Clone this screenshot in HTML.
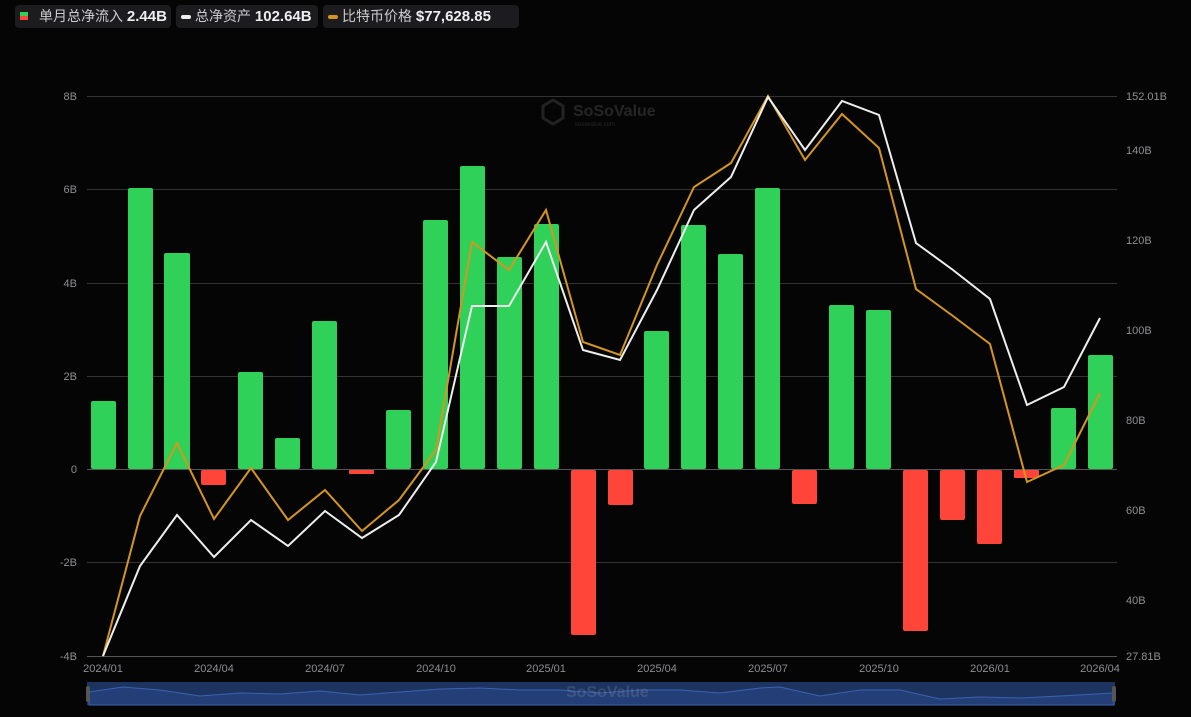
<!DOCTYPE html>
<html><head><meta charset="utf-8"><style>
html,body{margin:0;padding:0;background:#050505;width:1191px;height:717px;overflow:hidden}
.lg{position:absolute;top:5px;height:23px;background:#1c1c1e;border-radius:4px;color:#ccc;font:14px "Liberation Sans","Noto Sans CJK SC",sans-serif;line-height:23px;white-space:nowrap}
.lg b{color:#eee;font-weight:bold;font-size:15px}
svg text{font-family:"Liberation Sans",sans-serif;font-size:11px;fill:#8e8e93}
</style></head><body>
<div class="lg" style="left:15px;width:156px"><span style="position:absolute;left:5px;top:7px;width:8px;height:4px;background:#30d158"></span><span style="position:absolute;left:5px;top:11px;width:8px;height:4px;background:#ff453a"></span><span style="position:absolute;left:24px">单月总净流入 <b>2.44B</b></span></div>
<div class="lg" style="left:176px;width:142px"><span style="position:absolute;left:5px;top:10px;width:10px;height:4px;border-radius:2px;background:#eee"></span><span style="position:absolute;left:19px">总净资产 <b>102.64B</b></span></div>
<div class="lg" style="left:323px;width:196px"><span style="position:absolute;left:5px;top:10px;width:10px;height:4px;border-radius:2px;background:#d4961f"></span><span style="position:absolute;left:19px">比特币价格 <b>$77,628.85</b></span></div>
<svg width="1191" height="717" style="position:absolute;left:0;top:0">
<g stroke="#333" stroke-width="1">
<line x1="87" x2="1117" y1="96.5" y2="96.5"/><line x1="87" x2="1117" y1="189.5" y2="189.5"/><line x1="87" x2="1117" y1="283.5" y2="283.5"/><line x1="87" x2="1117" y1="376.5" y2="376.5"/><line x1="87" x2="1117" y1="562.5" y2="562.5"/>
</g>
<line x1="87" x2="1117" y1="469.5" y2="469.5" stroke="#555"/>
<line x1="87" x2="1117" y1="656.5" y2="656.5" stroke="#555"/>
<g text-anchor="end">
<text x="77" y="100">8B</text><text x="77" y="193">6B</text><text x="77" y="287">4B</text><text x="77" y="380">2B</text><text x="77" y="473">0</text><text x="77" y="566">-2B</text><text x="77" y="660">-4B</text>
</g>
<g>
<text x="1126" y="100">152.01B</text><text x="1126" y="154">140B</text><text x="1126" y="244">120B</text><text x="1126" y="334">100B</text><text x="1126" y="424">80B</text><text x="1126" y="514">60B</text><text x="1126" y="604">40B</text><text x="1126" y="660">27.81B</text>
</g>
<g text-anchor="middle">
<text x="103" y="672">2024/01</text><text x="214" y="672">2024/04</text><text x="325" y="672">2024/07</text><text x="436" y="672">2024/10</text><text x="546" y="672">2025/01</text><text x="657" y="672">2025/04</text><text x="768" y="672">2025/07</text><text x="879" y="672">2025/10</text><text x="990" y="672">2026/01</text><text x="1100" y="672">2026/04</text>
</g>
<g opacity="0.22">
<path d="M553 100 l10 6 v12 l-10 6 l-10 -6 v-12z" fill="none" stroke="#888" stroke-width="3"/>
<text x="573" y="116" style="font-size:16px;font-weight:bold;fill:#999">SoSoValue</text>
<text x="575" y="126" style="font-size:6px;fill:#999">sosovalue.com</text>
</g>
<g fill="#30d158">
<rect x="91" y="401" width="25" height="68" rx="2"/>
<rect x="128" y="188" width="25" height="281" rx="2"/>
<rect x="164" y="253" width="26" height="216" rx="2"/>
<rect x="238" y="372" width="25" height="97" rx="2"/>
<rect x="275" y="438" width="25" height="31" rx="2"/>
<rect x="312" y="321" width="25" height="148" rx="2"/>
<rect x="386" y="410" width="25" height="59" rx="2"/>
<rect x="423" y="220" width="25" height="249" rx="2"/>
<rect x="460" y="166" width="25" height="303" rx="2"/>
<rect x="497" y="257" width="25" height="212" rx="2"/>
<rect x="534" y="224" width="25" height="245" rx="2"/>
<rect x="644" y="331" width="25" height="138" rx="2"/>
<rect x="681" y="225" width="25" height="244" rx="2"/>
<rect x="718" y="254" width="25" height="215" rx="2"/>
<rect x="755" y="188" width="25" height="281" rx="2"/>
<rect x="829" y="305" width="25" height="164" rx="2"/>
<rect x="866" y="310" width="25" height="159" rx="2"/>
<rect x="1051" y="408" width="25" height="61" rx="2"/>
<rect x="1088" y="355" width="25" height="114" rx="2"/>
</g>
<g fill="#ff453a">
<rect x="201" y="470" width="25" height="15" rx="2"/>
<rect x="349" y="470" width="25" height="4" rx="1"/>
<rect x="571" y="470" width="25" height="165" rx="2"/>
<rect x="608" y="470" width="25" height="35" rx="2"/>
<rect x="792" y="470" width="25" height="34" rx="2"/>
<rect x="903" y="470" width="25" height="161" rx="2"/>
<rect x="940" y="470" width="25" height="50" rx="2"/>
<rect x="977" y="470" width="25" height="74" rx="2"/>
<rect x="1014" y="470" width="25" height="8" rx="1"/>
</g>
<polyline fill="none" stroke="#d4961f" stroke-width="2" points="103,656 140,516 177,443 214,519 251,468 288,520 325,490 362,531 399,500 436,450 472,242 509,270 546,210 583,342 620,355 657,265 694,187 731,163 768,96 805,160 842,114 879,148 916,289 953,316 990,344 1027,482 1064,465 1100,393"/>
<polyline fill="none" stroke="#eeeeee" stroke-width="2" points="103,656 140,566 177,515 214,557 251,520 288,546 325,511 362,538 399,515 436,462 472,306 509,306 546,242 583,350 620,360 657,290 694,210 731,177 768,97 805,150 842,101 879,115 916,243 953,270 990,299 1027,405 1064,387 1100,318"/>
<rect x="87" y="682" width="1028" height="23" fill="#1d3461"/>
<polygon fill="#243f78" stroke="#3a62b0" stroke-width="1" points="89,692 123,687 160,690 200,696 240,693 280,694 320,691 360,695 400,692 440,689 480,688 520,690 560,690 600,693 640,690 680,690 720,693 760,688 780,687 820,696 860,690 900,690 940,699 980,697 1020,698 1060,696 1114,693 1114,705 89,705"/>
<rect x="86" y="686" width="4" height="16" rx="2" fill="#555"/>
<rect x="1112" y="686" width="4" height="16" rx="2" fill="#555"/>
<g opacity="0.2"><text x="566" y="697" style="font-size:16px;font-weight:bold;fill:#aaa">SoSoValue</text></g>
</svg>
</body></html>
